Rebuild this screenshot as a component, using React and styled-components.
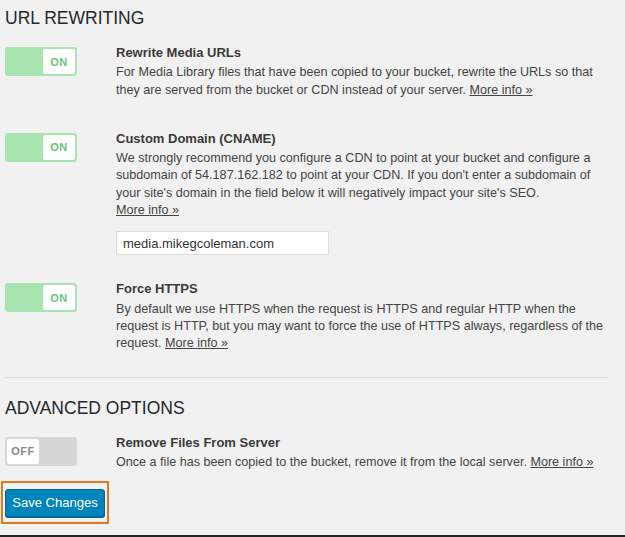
import React from "react";
import styled, { createGlobalStyle } from "styled-components";

const G = createGlobalStyle`
  html,body{margin:0;background:#f1f1f1;}
  body{font-family:"Liberation Sans",Arial,sans-serif;color:#444;}
`;
const Page = styled.div`
  width:625px;height:537px;box-sizing:border-box;padding:0 17px 0 5px;
  border-bottom:2px solid #222;overflow:hidden;
`;
const H = styled.h2`
  margin:${p=>p.$top}px 0 0;font-weight:400;font-size:17.5px;color:#23282d;line-height:24px;
`;
const Row = styled.div`
  display:grid;grid-template-columns:111px 1fr;margin-top:${p=>p.$top}px;
`;
const Toggle = styled.div`
  width:72px;height:29px;box-sizing:border-box;border-radius:3px;
  background:${p=>p.$on?"#a8e4b0":"#d6d6d6"};display:flex;
  justify-content:${p=>p.$on?"flex-end":"flex-start"};padding:2px;
`;
const Knob = styled.div`
  width:32px;background:#fff;border-radius:2px;display:flex;align-items:center;justify-content:center;
  font-size:11px;font-weight:700;color:${p=>p.$on?"#68c478":"#888"};letter-spacing:.5px;
`;
const Body = styled.div`font-size:12.6px;line-height:17.3px;`;
const Title = styled.div`font-weight:700;font-size:13px;color:#3a3a3a;margin-top:-3px;margin-bottom:3px;`;
const A = styled.a`color:#444;text-decoration:underline;`;
const Input = styled.div`
  margin-top:12px;width:213px;height:24px;box-sizing:border-box;border:1px solid #ddd;background:#fff;
  font-size:13px;color:#333;padding:2px 6px;line-height:19px;
`;
const Sep = styled.div`height:1px;background:#ddd;margin-top:${p=>p.$top}px;`;
const Focus = styled.div`
  margin:${p=>p.$top}px 0 0 -4px;width:108px;height:43px;box-sizing:border-box;border:2px solid #e8761c;
  display:flex;align-items:center;padding-left:2px;
`;
const Btn = styled.div`
  width:100px;height:28px;background:#0085ba;border:1px solid #006799;box-sizing:border-box;border-radius:3px;
  color:#fff;font-size:13px;display:flex;align-items:center;justify-content:center;
  box-shadow:0 1px 0 #006799;
`;

const Item=({on,title,children,top})=>(
  <Row $top={top}>
    <Toggle $on={on}><Knob $on={on}>{on?"ON":"OFF"}</Knob></Toggle>
    <Body><Title>{title}</Title>{children}</Body>
  </Row>
);

export default function App(){
  return <Page><G/>
    <H $top={6}>URL REWRITING</H>
    <Item on top={17} title="Rewrite Media URLs">For Media Library files that have been copied to your bucket, rewrite the URLs so that they are served from the bucket or CDN instead of your server. <A>More info »</A></Item>
    <Item on top={34} title="Custom Domain (CNAME)">We strongly recommend you configure a CDN to point at your bucket and configure a subdomain of 54.187.162.182 to point at your CDN. If you don't enter a subdomain of your site's domain in the field below it will negatively impact your site's SEO.<br/><A>More info »</A>
      <Input>media.mikegcoleman.com</Input></Item>
    <Item on top={28} title="Force HTTPS">By default we use HTTPS when the request is HTTPS and regular HTTP when the request is HTTP, but you may want to force the use of HTTPS always, regardless of the request. <A>More info »</A></Item>
    <Sep $top={24}/>
    <H $top={18}>ADVANCED OPTIONS</H>
    <Item top={17} title="Remove Files From Server">Once a file has been copied to the bucket, remove it from the local server. <A>More info »</A></Item>
    <Focus $top={10}><Btn>Save Changes</Btn></Focus>
  </Page>;
}
